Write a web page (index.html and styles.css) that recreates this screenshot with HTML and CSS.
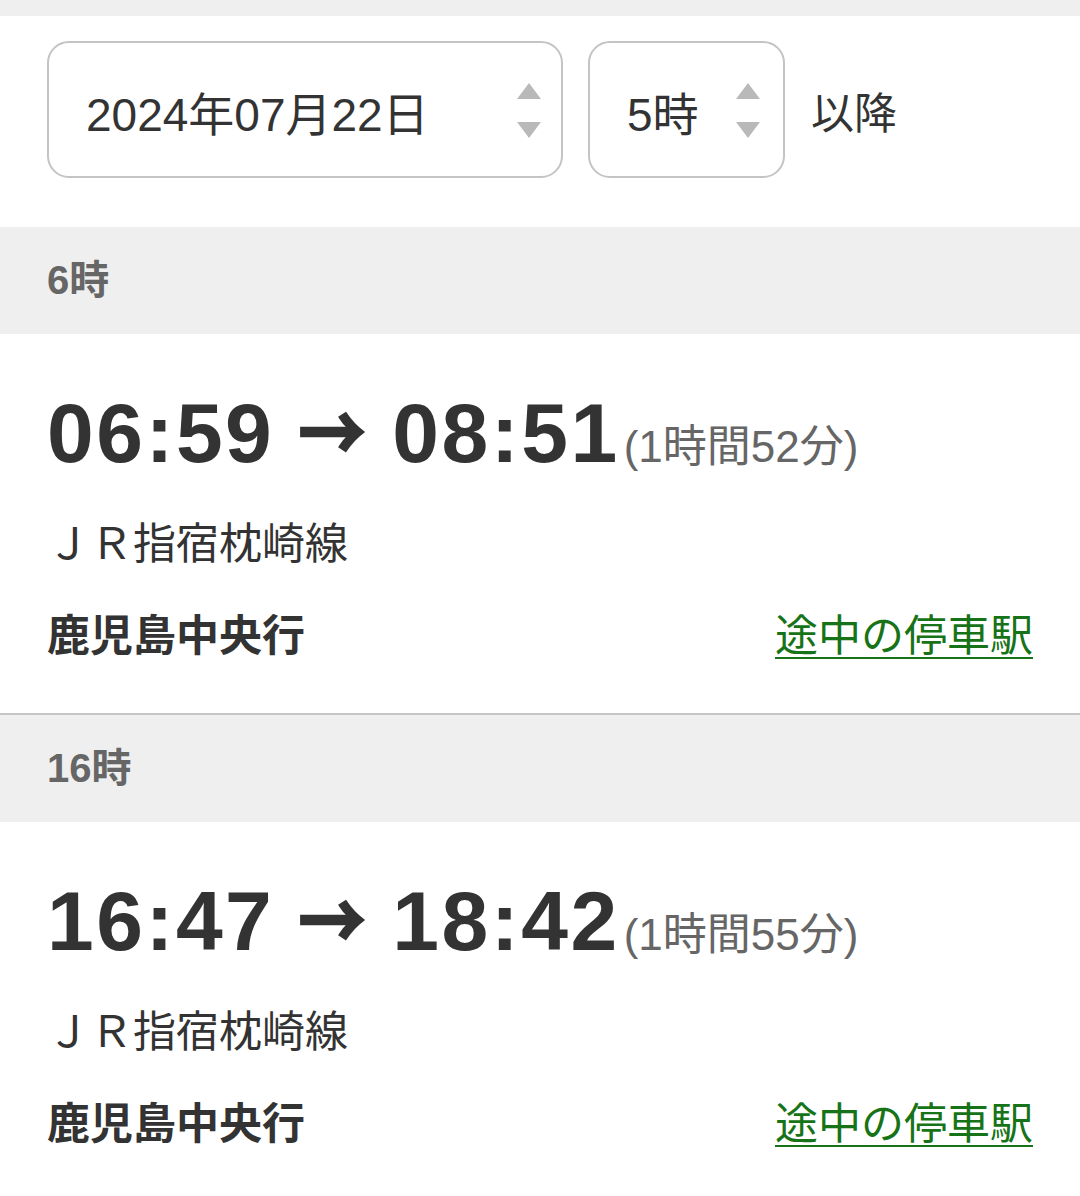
FILE: index.html
```html
<!DOCTYPE html>
<html lang="ja">
<head>
<meta charset="utf-8">
<title>時刻表</title>
<link rel="stylesheet" href="styles.css">
</head>
<body>
<div class="topbar"></div>
<form class="filter">
  <div class="select date">
    <span class="select-value">2024年07月22日</span>
    <svg class="spin" width="24" height="56" viewBox="0 0 24 56"><polygon points="12,0 24,16 0,16"/><polygon points="0,39 24,39 12,55"/></svg>
  </div>
  <div class="select hour">
    <span class="select-value">5時</span>
    <svg class="spin" width="24" height="56" viewBox="0 0 24 56"><polygon points="12,0 24,16 0,16"/><polygon points="0,39 24,39 12,55"/></svg>
  </div>
  <span class="after">以降</span>
</form>

<section>
  <h2 class="hour-head">6時</h2>
  <div class="train">
    <div class="times"><span class="t">06:59</span><span class="arrow">→</span><span class="t">08:51</span><span class="dur">(1時間52分)</span></div>
    <div class="line">ＪＲ指宿枕崎線</div>
    <div class="dest-row"><span class="dest">鹿児島中央行</span><a class="stops" href="#">途中の停車駅</a></div>
  </div>
</section>

<section>
  <h2 class="hour-head">16時</h2>
  <div class="train">
    <div class="times"><span class="t">16:47</span><span class="arrow">→</span><span class="t">18:42</span><span class="dur">(1時間55分)</span></div>
    <div class="line">ＪＲ指宿枕崎線</div>
    <div class="dest-row"><span class="dest">鹿児島中央行</span><a class="stops" href="#">途中の停車駅</a></div>
  </div>
</section>
</body>
</html>
```
FILE: styles.css
```css
html, body {
  margin: 0;
  padding: 0;
  background: #fff;
}
body {
  font-family: "Liberation Sans", "Noto Sans CJK JP", sans-serif;
  color: #333;
  width: 1080px;
  overflow: hidden;
}
.topbar {
  height: 16px;
  background: #efefef;
}
.filter {
  display: flex;
  align-items: center;
  padding: 25px 47px 49px;
  margin: 0;
}
.select {
  box-sizing: border-box;
  height: 137px;
  border: 2px solid #c4c4c4;
  border-radius: 22px;
  display: flex;
  align-items: center;
  justify-content: space-between;
  padding: 2px 20px 0 37px;
  font-size: 46px;
  color: #333;
}
.select.date {
  width: 516px;
}
.select.hour {
  width: 197px;
  margin-left: 25px;
  padding-right: 23px;
}
.spin {
  fill: #b9b9b9;
  display: block;
}
.after {
  margin-left: 26px;
  font-size: 43px;
  color: #333;
}
.hour-head {
  margin: 0;
  height: 107px;
  line-height: 107px;
  background: #efefef;
  padding-left: 47px;
  font-size: 40px;
  font-weight: bold;
  color: #666;
}
.train {
  padding: 49px 47px 47px;
  border-bottom: 2px solid #c6c6c6;
}
.times {
  font-size: 84px;
  line-height: 100px;
  font-weight: bold;
  color: #333;
  white-space: nowrap;
}
.t {
  letter-spacing: 2.5px;
}
.arrow {
  display: inline-block;
  font-family: "Noto Sans CJK JP", sans-serif;
  font-size: 78px;
  line-height: 1;
  -webkit-text-stroke: 2.5px #333;
  transform: scaleX(0.86);
  margin: 0 21px 0 19px;
}
.dur {
  font-size: 44px;
  line-height: 1;
  font-weight: normal;
  color: #666;
  margin-left: 4px;
}
.line {
  margin-top: 31px;
  font-size: 43px;
  line-height: 60px;
  color: #333;
}
.dest-row {
  margin-top: 32px;
  display: flex;
  justify-content: space-between;
  align-items: baseline;
  font-size: 43px;
  line-height: 60px;
}
.dest {
  font-weight: bold;
  color: #333;
}
.stops {
  color: #177317;
  text-decoration: underline;
  text-underline-offset: 6px;
  text-decoration-thickness: 2px;
}
```
